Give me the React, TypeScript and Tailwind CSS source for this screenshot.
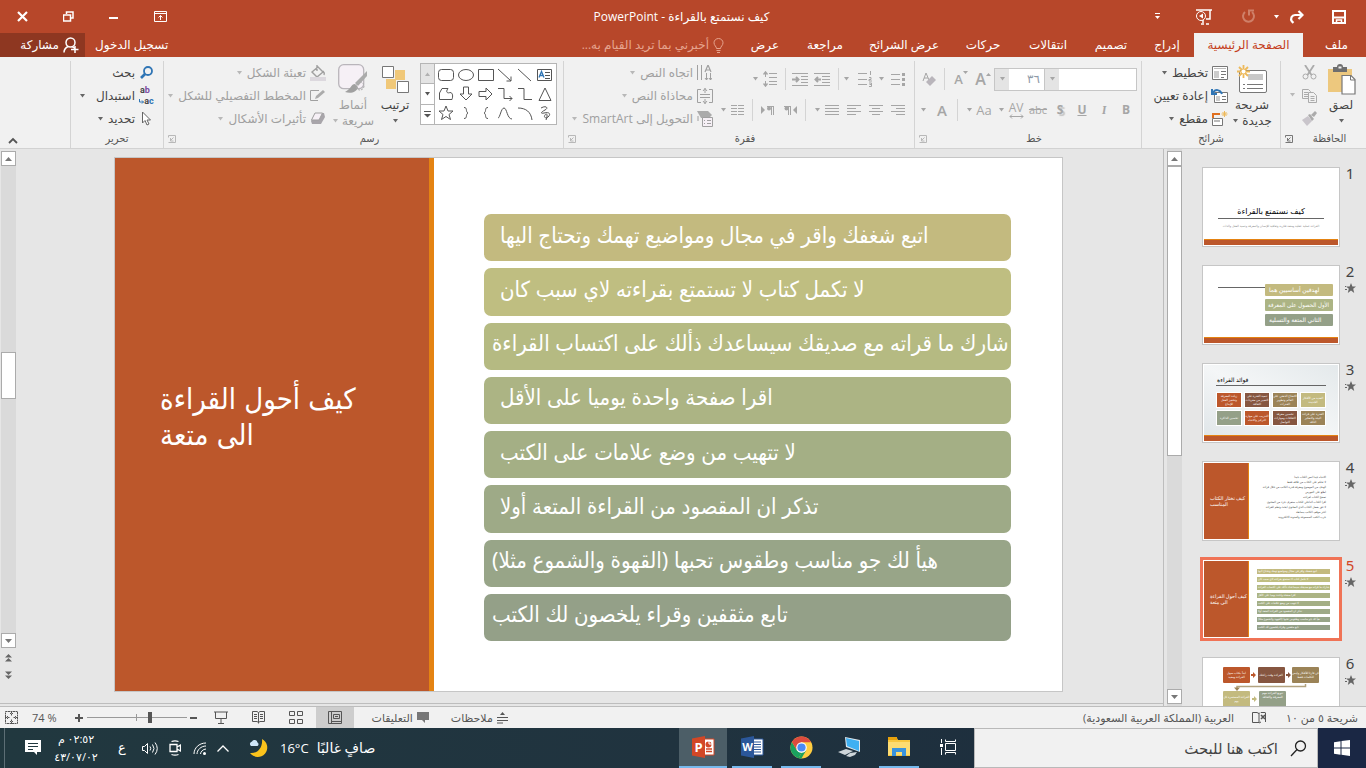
import type { ReactNode } from 'react';

type IconProps = {
  w: number;
  h: number;
  children: ReactNode;
  className?: string;
};

// Stroke icon on a 1:1 pixel grid
function Icon({ w, h, children, className = '' }: IconProps) {
  return (
    <svg width={w} height={h} viewBox={`0 0 ${w} ${h}`} fill="none" stroke="currentColor" className={`shrink-0 ${className}`} aria-hidden="true">
      {children}
    </svg>
  );
}

function Caret({ className = '' }: { className?: string }) {
  return (
    <svg width="7" height="4" viewBox="0 0 7 4" className={`shrink-0 ${className}`} aria-hidden="true">
      <path d="M1 0h5L3.500 3.500z" fill="currentColor" />
    </svg>
  );
}

function Sep({ className = '' }: { className?: string }) {
  return <span className={`w-px h-[22px] shrink-0 bg-[#d4d4d4] ${className}`} />;
}

const tabs = [
  { label: 'إدراج', width: 'w-[54px]' },
  { label: 'تصميم', width: 'w-[58px]' },
  { label: 'انتقالات', width: 'w-[68px]' },
  { label: 'حركات', width: 'w-[62px]' },
  { label: 'عرض الشرائح', width: 'w-[96px]' },
  { label: 'مراجعة', width: 'w-[62px]' },
  { label: 'عرض', width: 'w-[58px]' },
];

const points = [
  { text: 'اتبع شغفك واقر في مجال ومواضيع تهمك وتحتاج اليها', color: 'bg-[#c3ba7f]', pad: 'pl-4' },
  { text: 'لا تكمل كتاب لا تستمتع بقراءته لاي سبب كان', color: 'bg-[#bfbe81]', pad: 'pl-4' },
  { text: 'شارك ما قراته مع صديقك سيساعدك ذألك على اكتساب القراءة', color: 'bg-[#b5ba82]', pad: 'pl-2' },
  { text: 'اقرا صفحة واحدة يوميا على الأقل', color: 'bg-[#acb484]', pad: 'pl-4' },
  { text: 'لا تتهيب من وضع علامات على الكتب', color: 'bg-[#a4af85]', pad: 'pl-4' },
  { text: 'تذكر ان المقصود من القراءة المتعة أولا', color: 'bg-[#9eaa87]', pad: 'pl-4' },
  { text: 'هيأ لك جو مناسب وطقوس تحبها (القهوة والشموع مثلا)', color: 'bg-[#98a588]', pad: 'pl-2' },
  { text: 'تابع مثقفين وقراء يلخصون لك الكتب', color: 'bg-[#94a088]', pad: 'pl-2' },
];

function TitleBar() {
  return (
    <header className="flex h-[33px] items-center text-white">
      <div className="flex flex-1 items-center pr-[20px]">
        <button aria-label="حفظ">
          <Icon w={14} h={14}>
            <path d="M1 1h12v12H1z" strokeWidth="2" />
            <path d="M2 7.500h10" strokeWidth="2" />
            <path d="M4.500 13v-3h5v3" strokeWidth="1.500" />
          </Icon>
        </button>
        <button aria-label="إعادة" className="ms-[28px]">
          <Icon w={15} h={14}>
            <path d="M13 5H6a4 4 0 0 0-3 6.500l1.500 1.300" strokeWidth="2.200" />
            <path d="M9.500 1l4 4-4 4" strokeWidth="2.200" />
          </Icon>
        </button>
        <Caret className="ms-[9px]" />
        <button aria-label="تراجع" className="ms-[17px] text-[#cf8069]">
          <Icon w={15} h={15}>
            <path d="M4 3a5.500 5.500 0 1 0 7 0" strokeWidth="2" />
            <path d="M8 6.500V1.500h5" strokeWidth="2" />
          </Icon>
        </button>
        <button aria-label="بدء العرض" className="ms-[29px]">
          <Icon w={17} h={16}>
            <path d="M1 1h16M15 1v9h-4M8 11v3M6 15h3M11 15h3" strokeWidth="1.500" />
            <circle cx="6" cy="7" r="4.500" />
            <path d="M8 4.500v5L4 7z" fill="currentColor" stroke="none" />
          </Icon>
        </button>
        <button aria-label="تخصيص شريط الأدوات" className="ms-[34px]">
          <Icon w={7} h={7}>
            <path d="M1 .5h5" />
            <path d="M1 3h5L3.500 6z" fill="currentColor" stroke="none" />
          </Icon>
        </button>
      </div>
      <h1 className="text-[12px] leading-4">كيف نستمتع بالقراءة - PowerPoint</h1>
      <div className="flex flex-1 items-center justify-end gap-[35px] pl-[17px]">
        <button aria-label="خيارات الشريط">
          <Icon w={13} h={11}>
            <path d="M.5.500h12v10H.5zM.5 2.500h12M6.500 9V4.500M4.500 6.500l2-2 2 2" />
          </Icon>
        </button>
        <button aria-label="تصغير">
          <Icon w={10} h={10}>
            <path d="M0 6h9" strokeWidth="2" />
          </Icon>
        </button>
        <button aria-label="استعادة">
          <Icon w={11} h={11}>
            <path d="M3.500 3V1H10v6H8M.5 4h7v6h-7z" strokeWidth="1.500" />
          </Icon>
        </button>
        <button aria-label="إغلاق">
          <Icon w={11} h={11}>
            <path d="M1 1l9 9M10 1l-9 9" strokeWidth="2.200" />
          </Icon>
        </button>
      </div>
    </header>
  );
}

function TabRow() {
  return (
    <nav className="flex h-6 items-stretch text-[12px] leading-[22px] whitespace-nowrap text-white">
      <button className="w-[59px]">ملف</button>
      <button className="ms-1 w-[109px] bg-[#f1f1f1] text-[#c43e1c]">الصفحة الرئيسية</button>
      {tabs.map((t) => (
        <button key={t.label} className={t.width}>{t.label}</button>
      ))}
      <button className="ms-3 flex items-center gap-1 text-[#e6a48f]">
        <Icon w={11} h={15}>
          <path d="M3.500 10.500C3.500 8.500 1 7.500 1 4.800a4.500 4.300 0 0 1 9 0c0 2.700-2.500 3.700-2.500 5.700zM3.500 12.500h4M4 14.500h3" />
        </Icon>
        أخبرني بما تريد القيام به...
      </button>
      <span className="flex-1" />
      <button className="px-2.5">تسجيل الدخول</button>
      <button className="flex w-[85px] items-center gap-1 bg-[#8e3721] pr-1.5">
        <Icon w={16} h={16}>
          <circle cx="7.500" cy="5.500" r="4.500" strokeWidth="1.500" />
          <path d="M1 15.500c0-3 2-5 4-6M9 9.500l3 2M8 12.500h7.500M12 9v7" strokeWidth="1.500" />
        </Icon>
        مشاركة
      </button>
    </nav>
  );
}

type GroupProps = {
  label: string;
  width: string;
  launcher?: boolean;
  dim?: boolean;
  children: ReactNode;
};

function Group({ label, width, launcher, dim, children }: GroupProps) {
  return (
    <section aria-label={label} className={`flex shrink-0 flex-col pt-1 ${width}`}>
      <div className="flex flex-1 border-l border-[#d4d4d4]">
        <div className="flex flex-1 flex-col">
          <div className="flex h-[69px]">{children}</div>
          <div className="flex h-[18px] items-center text-[11px] leading-4 text-[#555]">
            <span className="flex-1 text-center font-['DejaVu_Sans_Condensed','DejaVu_Sans',sans-serif]">{label}</span>
            {launcher && (
              <button aria-label={`خيارات ${label}`} className={`w-3 ${dim ? 'text-[#b8b8b8]' : 'text-[#777]'}`}>
                <Icon w={8} h={8}>
                  <path d="M7.500 7.500V.5H.5v2M.5 7.500h7M5.500 2.500l-3 3M2.500 3v3h3" />
                </Icon>
              </button>
            )}
          </div>
        </div>
      </div>
    </section>
  );
}

type CommandProps = {
  icon: ReactNode;
  label: string;
  dim?: boolean;
  caret?: string;
};

function Command({ icon, label, dim, caret }: CommandProps) {
  return (
    <button className={`flex h-[23px] items-center text-[12px] whitespace-nowrap ${dim ? 'text-[#a0a0a0]' : 'text-[#444]'}`}>
      <span className="flex w-[17px] justify-center">{icon}</span>
      <span className="ms-[3px] leading-5">{label}</span>
      {caret && <Caret className={`${caret} ${dim ? 'text-[#b8b8b8]' : 'text-[#666]'}`} />}
    </button>
  );
}

type BigProps = {
  icon: ReactNode;
  lines: string[];
  width: string;
  dim?: boolean;
};

function BigCommand({ icon, lines, width, dim }: BigProps) {
  return (
    <button className={`flex flex-col items-center text-[12px] whitespace-nowrap ${width} ${dim ? 'text-[#a0a0a0]' : 'text-[#444]'}`}>
      <span className="flex h-9 items-center">{icon}</span>
      <span className="leading-4">{lines[0]}</span>
      <span className="flex h-4 items-center gap-[3px] leading-4">
        {lines[1]}
        <Caret className={dim ? 'text-[#b8b8b8]' : 'text-[#666]'} />
      </span>
    </button>
  );
}

function Clipboard() {
  return (
    <Group label="الحافظة" width="w-[86px]" launcher>
      <div className="flex pr-[6px]">
        <BigCommand
          width="w-[38px]"
          lines={['لصق']}
          icon={
            <Icon w={29} h={31}>
              <path d="M1 5h24v23H1z" fill="#edc87e" stroke="none" />
              <path d="M6 3h4a3 3 0 0 1 6 0h4v5H6z" fill="#6e6e6e" stroke="none" />
              <path d="M11.500 2.500h3v2h-3z" fill="#f1f1f1" stroke="none" />
              <path d="M15 11.500h9l4 4V30H15z" fill="#fff" stroke="#777" strokeWidth="1.200" />
              <path d="M23.500 12v4H28" stroke="#777" />
            </Icon>
          }
        />
        <div className="flex w-[26px] flex-col text-[#ababab]">
          <button aria-label="قص" className="flex h-[23px] items-center justify-center">
            <Icon w={15} h={15}>
              <path d="M3 0l6.500 10M12 0L5.500 10" strokeWidth="1.800" />
              <circle cx="3.500" cy="11.500" r="2.500" />
              <circle cx="11.500" cy="11.500" r="2.500" />
            </Icon>
          </button>
          <button aria-label="نسخ" className="flex h-[23px] items-center justify-center">
            <Icon w={15} h={14}>
              <path d="M.5.500h6l2 2v7h-8zM2 3.500h4M2 5.500h4M2 7.500h4" />
              <path d="M6.500 3.500h5l3 3v7h-8z" fill="#f1f1f1" />
              <path d="M8.500 7.500h4M8.500 9.500h4M8.500 11.500h4" />
            </Icon>
          </button>
          <button aria-label="نسخ التنسيق" className="flex h-[23px] items-center justify-center">
            <Icon w={16} h={15}>
              <path d="M1 9l6-4 4 5-5 5z" fill="#c9c5cb" stroke="none" />
              <path d="M7 4l2-1 4 5-2 2zM10 4l4-4 2 2-3 4z" fill="#ababab" stroke="none" />
            </Icon>
          </button>
        </div>
        <Caret className="mt-8 text-[#b8b8b8]" />
      </div>
    </Group>
  );
}

function Slides() {
  return (
    <Group label="شرائح" width="w-[139px]">
      <div className="flex pr-1">
        <BigCommand
          width="w-12"
          lines={['شريحة', 'جديدة']}
          icon={
            <Icon w={31} h={29} className="text-[#777]">
              <rect x="2.500" y="5.500" width="27" height="22" rx="1.500" fill="#fff" />
              <path d="M11 9h15v6H11z" fill="#c8c8c8" stroke="none" />
              <path d="M6 19.500h2M10 19.500h16M6 23.500h2M10 23.500h16" />
              <path d="M6.500 0v13M0 6.500h13M2 2l9 9M11 2l-9 9" stroke="#edb95a" strokeWidth="1.800" />
              <circle cx="6.500" cy="6.500" r="2" fill="#fff" stroke="none" />
            </Icon>
          }
        />
        <div className="flex flex-col">
          <Command
            label="تخطيط"
            caret="ms-1"
            icon={
              <Icon w={16} h={14} className="text-[#777]">
                <path d="M.5.500h15v13H.5z" fill="#fff" />
                <path d="M2 2.500h12" stroke="#bbb" />
                <path d="M2 5h5v7H2z" fill="#ccc" stroke="none" />
                <path d="M9 5.500h5M9 8.500h5M9 11.500h3" />
              </Icon>
            }
          />
          <Command
            label="إعادة تعيين"
            icon={
              <Icon w={17} h={15} className="text-[#777]">
                <path d="M3.500 4.500h13v10h-13z" fill="#fff" />
                <path d="M5 8h4v5H5z" fill="#ccc" stroke="none" />
                <path d="M11 8.500h4M11 11.500h4" />
                <path d="M2 5c2-4 7-4 9 1M1 1v5h5" stroke="#2f75b5" strokeWidth="2" />
              </Icon>
            }
          />
          <Command
            label="مقطع"
            caret="ms-1"
            icon={
              <Icon w={16} h={15} className="text-[#777]">
                <path d="M0 3h8M1 3v4" stroke="#e07020" strokeWidth="2" />
                <path d="M.5 7.500h10v7H.5z" fill="#fff" />
                <path d="M2 10h6" stroke="#bbb" strokeWidth="2" />
                <path d="M12.500 0v6M9.500 3h6M10.500 1l4 4M14.500 1l-4 4" stroke="#edb95a" />
              </Icon>
            }
          />
        </div>
      </div>
    </Group>
  );
}

function FontGroup() {
  return (
    <Group label="خط" width="w-[227px]" launcher dim>
      <div className="flex flex-col pr-[4px] text-[#a6a6a6]">
        <div className="flex h-9 items-center">
          <div className="flex h-[23px] w-[93px] border border-[#c6c6c6] bg-white">
            <input aria-label="نوع الخط" className="w-full min-w-0 flex-1 px-1 outline-none" />
            <button aria-label="قائمة الخطوط" className="flex w-[14px] items-center justify-center bg-[#e4e4e4]">
              <Caret />
            </button>
          </div>
          <div className="flex h-[23px] w-[50px] border border-r-0 border-[#c6c6c6] bg-white">
            <input aria-label="حجم الخط" defaultValue="٣٦" className="w-full min-w-0 flex-1 pr-1 text-[12px] text-[#8f9aa8] outline-none" />
            <button aria-label="قائمة الأحجام" className="flex w-[14px] items-center justify-center bg-[#e4e4e4]">
              <Caret />
            </button>
          </div>
          <button aria-label="تكبير الخط" className="flex w-[22px] items-start justify-center" dir="ltr">
            <span className="text-base leading-5 font-semibold">A</span>
            <Icon w={5} h={3} className="mt-1"><path d="M0 3h5L2.500 0z" fill="currentColor" stroke="none" /></Icon>
          </button>
          <button aria-label="تصغير الخط" className="flex w-[22px] items-start justify-center" dir="ltr">
            <span className="text-[13px] leading-6 font-semibold">A</span>
            <Icon w={5} h={3} className="mt-1"><path d="M0 0h5L2.500 3z" fill="currentColor" stroke="none" /></Icon>
          </button>
          <Sep className="mx-[5px]" />
          <button aria-label="مسح التنسيق" className="flex w-5 justify-center">
            <Icon w={15} h={15}>
              <path d="M1 9L4 1l3 7M2 6h4" />
              <path d="M4 10l6-6 4 4-6 6z" fill="#b9b5bb" stroke="none" />
            </Icon>
          </button>
        </div>
        <div className="flex h-[26px] items-center text-[12px] leading-5">
          <button className="w-[22px] font-bold">B</button>
          <button className="w-[22px] font-serif font-bold italic">I</button>
          <button className="w-[22px] font-bold underline">U</button>
          <button className="w-[22px] font-bold [text-shadow:2px_2px_1px_#c4c4c4]">S</button>
          <button className="w-[22px] text-[11px] line-through">abc</button>
          <button aria-label="تباعد الأحرف" className="flex w-[22px] flex-col items-center">
            <span className="leading-3">AV</span>
            <Icon w={15} h={5}><path d="M1 2.500h13M3 .5l-2 2 2 2M12 .5l2 2-2 2" /></Icon>
          </button>
          <Caret />
          <button className="ms-[3px] w-[22px] text-[13px]">Aa</button>
          <Caret />
          <Sep className="mx-2" />
          <button className="w-[14px] text-[15px] font-semibold">A</button>
          <Caret className="ms-2" />
        </div>
      </div>
    </Group>
  );
}

function ParagraphGroup() {
  return (
    <Group label="فقرة" width="w-[351px]" launcher dim>
      <div className="flex w-[196px] flex-col pr-[9px] text-[#a6a6a6]">
        <div className="flex h-9 items-center">
          <button aria-label="تعداد نقطي">
            <Icon w={14} h={15}>
              <path d="M0 2.500h9M0 7.500h9M0 12.500h9" />
              <path d="M11 1h3v3h-3zM11 6h3v3h-3zM11 11h3v3h-3z" fill="currentColor" stroke="none" />
            </Icon>
          </button>
          <Caret className="ms-1.5" />
          <button aria-label="تعداد رقمي" className="ms-1.5">
            <Icon w={14} h={16}>
              <path d="M0 2.500h9M0 8.500h9M0 13.500h9M12.500 0v4M11 6.500h2v2h-2v1.500h3M11 12h2.500v3.500H11M11.500 13.500h2" />
            </Icon>
          </button>
          <Caret className="ms-2" />
          <Sep className="ms-1" />
          <button aria-label="تقليل المسافة البادئة" className="ms-2">
            <Icon w={16} h={13}>
              <path d="M0 .5h16M8 3.500h8M8 6.500h8M8 9.500h8M0 12.500h16" />
              <path d="M1 6.500h6M4 4L1.500 6.500 4 9" strokeWidth="2" />
            </Icon>
          </button>
          <button aria-label="زيادة المسافة البادئة" className="ms-1.5">
            <Icon w={16} h={13}>
              <path d="M0 .5h16M9 3.500h7M9 6.500h7M9 9.500h7M0 12.500h16" />
              <path d="M0 6.500h6M4 4l2.500 2.500L4 9" strokeWidth="2" />
            </Icon>
          </button>
          <Sep className="ms-1.5" />
          <button aria-label="تباعد الأسطر" className="ms-2">
            <Icon w={14} h={16}>
              <path d="M6 2.500h8M6 6.500h8M6 10.500h8M6 13.500h8M2.500 1v5M2.500 10v5" />
              <path d="M.5 3.500l2-2.500 2 2.500M.5 12.500l2 2.500 2-2.500" strokeWidth="1.500" />
            </Icon>
          </button>
          <Caret className="ms-1" />
        </div>
        <div className="flex h-[26px] items-center">
          <div className="flex gap-2">
            <button aria-label="محاذاة لليمين"><Icon w={14} h={11}><path d="M0 .5h14M5 3.500h9M0 6.500h14M5 9.500h9" /></Icon></button>
            <button aria-label="توسيط"><Icon w={14} h={11}><path d="M0 .5h14M3 3.500h8M0 6.500h14M3 9.500h8" /></Icon></button>
            <button aria-label="محاذاة لليسار"><Icon w={14} h={11}><path d="M0 .5h14M0 3.500h9M0 6.500h14M0 9.500h9" /></Icon></button>
            <button aria-label="ضبط"><Icon w={14} h={11}><path d="M0 .5h14M0 3.500h14M0 6.500h14M0 9.500h14" /></Icon></button>
          </div>
          <Caret className="ms-1" />
          <Sep className="ms-2" />
          <button aria-label="من اليمين لليسار" className="ms-2">
            <Icon w={13} h={9}>
              <path d="M0 0v8l4-4z" fill="currentColor" stroke="none" transform="translate(9 0) scale(-1 1) translate(-4 0)" />
              <path d="M0 .5h7M6.500 0v9M4.500 0v9" />
              <circle cx="2.500" cy="2.500" r="2" fill="currentColor" stroke="none" />
            </Icon>
          </button>
          <button aria-label="من اليسار لليمين" className="ms-2.5">
            <Icon w={13} h={9}>
              <path d="M0 0v8l4-4z" fill="currentColor" stroke="none" />
              <path d="M6 .5h7M12.500 0v9M10.500 0v9" />
              <circle cx="8" cy="2.500" r="2" fill="currentColor" stroke="none" />
            </Icon>
          </button>
          <Sep className="ms-2" />
          <button aria-label="أعمدة" className="ms-2">
            <Icon w={13} h={11}>
              <path d="M0 .5h6M0 3.500h6M0 6.500h6M0 9.500h6M7 .5h6M7 3.500h6M7 6.500h6M7 9.500h6" />
            </Icon>
          </button>
          <Caret className="ms-1" />
        </div>
      </div>
      <div className="ms-[5px] flex flex-col">
        <Command
          dim
          label="اتجاه النص"
          caret="ms-1"
          icon={
            <Icon w={15} h={16}>
              <path d="M.5 0v15M4.500 0v15M9.500 8v7M13.500 8v7M8 13l1.500 2 1.500-2M12 13l1.500 2 1.500-2" />
              <path d="M8 7l3-7 3 7M9 5h4" strokeWidth="1.200" />
            </Icon>
          }
        />
        <Command
          dim
          label="محاذاة النص"
          caret="ms-1"
          icon={
            <Icon w={16} h={16}>
              <path d="M4 1.500H.5v13H4M12 1.500h3.500v13H12" />
              <path d="M8 0v5M6 3l2-2.500L10 3M8 11v5M6 13l2 2.500L10 13M3 6.500h10M3 9.500h10" />
            </Icon>
          }
        />
        <Command
          dim
          label="التحويل إلى SmartArt"
          caret="ms-1"
          icon={
            <Icon w={16} h={16}>
              <path d="M0 0h11l4 4-3 3H4z" fill="#ababab" stroke="none" />
              <path d="M5.500 6.500h10v9h-10z" fill="#f6f0f6" />
              <path d="M7 9.500h1M10 9.500h4M7 12.500h1M10 12.500h4M1 5v5" />
            </Icon>
          }
        />
      </div>
    </Group>
  );
}

// Gallery cells, right to left
const shapes = [
  <><path d="M.5 2.500h14v11H.5z" /><path d="M2 10.500l2.500-6 2.500 6M3 8.500h3" stroke="#2f75b5" strokeWidth="1.300" /><path d="M8 5.500h5M8 8.500h5M8 11.500h5" /></>,
  <path d="M1 2l13 12" />,
  <path d="M1 2l13 12M14 9.500V14H9.500" />,
  <path d="M.5 2.500h15v11H.5z" />,
  <ellipse cx="8" cy="8" rx="7.500" ry="5.500" />,
  <rect x=".5" y="2.500" width="15" height="11" rx="3" />,
  <path d="M8 2L2 14.500h12z" />,
  <path d="M1 2.500h6v11h8" />,
  <path d="M1 2.500h6v10h8M12.500 10l2.500 2.500-2.500 2.500" />,
  <path d="M1 5.500h7V2l6 6-6 6v-3.500H1z" />,
  <path d="M5.500 1h5v7H14l-6 6-6-6h3.500z" />,
  <path d="M4 2.500h6c-3 4 0 5 2 4 3 0 3 4 2 7H1.500V7z" />,
  <path d="M4 3c5-3 8 0 4 2S3 9 7 8s7 0 5 3-6 2-4-1 3 1 1 5" />,
  <path d="M1 3c8 0 13 4 14 12" />,
  <path d="M1 13C3 13 4 3 7 3s3 11 8 11" />,
  <path d="M10 2.500c-4 0-1 4-4 5.500 3 1.500 0 5.500 4 5.500" />,
  <path d="M6 2.500c4 0 1 4 4 5.500-3 1.500 0 5.500-4 5.500" />,
  <path d="M8 1l2 5h5l-4 3.500 1.500 5L8 11.500l-4.500 3 1.500-5L1 6h5z" />,
];

function DrawingGroup() {
  return (
    <Group label="رسم" width="w-[400px]" launcher dim>
      <div className="ms-[6px] mt-0.5 flex h-[62px] w-[137px] shrink-0 border border-[#b5b5b5] bg-white">
        <div className="grid flex-1 grid-cols-6 grid-rows-3 p-px">
          {shapes.map((s, i) => (
            <button key={i} aria-label={`شكل ${i + 1}`} className="flex items-center justify-center text-[#555]">
              <Icon w={16} h={16}>{s}</Icon>
            </button>
          ))}
        </div>
        <div className="flex w-[14px] flex-col border-r border-[#b5b5b5] text-[#555]">
          <button aria-label="أعلى" className="flex flex-1 items-center justify-center bg-[#e4e4e4] text-[#b0b0b0]"><Caret className="rotate-180" /></button>
          <button aria-label="أسفل" className="flex flex-1 items-center justify-center border-y border-[#b5b5b5]"><Caret /></button>
          <button aria-label="المزيد" className="flex flex-1 items-center justify-center">
            <Icon w={7} h={7}><path d="M0 .5h7" /><path d="M0 3h7L3.500 6.500z" fill="currentColor" stroke="none" /></Icon>
          </button>
        </div>
      </div>
      <div className="ms-[6px] flex">
        <BigCommand
          width="w-[38px]"
          lines={['ترتيب']}
          icon={
            <Icon w={27} h={27}>
              <path d="M13 4h10v10H13zM4 13h10v10H4z" fill="#f0c879" stroke="none" />
              <path d="M.5.500h11v11H.5zM15.500 15.500h11v11h-11z" fill="#fff" stroke="#777" />
            </Icon>
          }
        />
        <BigCommand
          dim
          width="w-[46px]"
          lines={['أنماط', 'سريعة']}
          icon={
            <Icon w={30} h={30}>
              <rect x=".7" y=".7" width="25" height="24" rx="5" fill="#f6f0f6" stroke="#b9b5bb" strokeWidth="1.300" />
              <path d="M29 7L17 19l3 3 9-10z" fill="#ababab" stroke="none" />
              <path d="M17 20c-4 0-4 5-10 8 6 2 12 0 13-5z" fill="#a0a0a0" stroke="none" />
              <circle cx="22" cy="22" r="4" strokeDasharray="2 1" stroke="#ababab" />
            </Icon>
          }
        />
      </div>
      <div className="ms-[4px] flex flex-col">
        <Command
          dim
          label="تعبئة الشكل"
          caret="ms-1"
          icon={
            <Icon w={16} h={16}>
              <path d="M2 7l6-5 5 5-6 5zM7 0v6M13 6c2 2 1 4 1 4" strokeWidth="1.400" />
              <path d="M0 12h16v4H0z" fill="#dcd8de" stroke="none" />
            </Icon>
          }
        />
        <Command
          dim
          label="المخطط التفصيلي للشكل"
          caret="ms-1"
          icon={
            <Icon w={16} h={13}>
              <path d="M9 1.500H.5v10H8" />
              <path d="M5 10l1-3 7-6 2 2-7 6z" fill="#ababab" stroke="none" />
            </Icon>
          }
        />
        <Command
          dim
          label="تأثيرات الأشكال"
          caret="ms-1"
          icon={
            <Icon w={16} h={13}>
              <path d="M5 1h9l1 4-4 7H2L1 9z" fill="#a8a5aa" stroke="none" />
              <path d="M5 1h7.500L9 8H1.500z" fill="#f6f0f6" />
            </Icon>
          }
        />
      </div>
    </Group>
  );
}

function EditingGroup() {
  return (
    <Group label="تحرير" width="w-[93px]">
      <div className="ms-2 flex flex-col">
        <Command
          label="بحث"
          icon={
            <Icon w={13} h={13} className="text-[#2f75b5]">
              <circle cx="8" cy="5" r="4" strokeWidth="1.800" />
              <path d="M5 8l-4 4" strokeWidth="2.600" />
            </Icon>
          }
        />
        <Command
          label="استبدال"
          caret="ms-2.5"
          icon={
            <span dir="ltr" className="flex flex-col items-end font-[Roboto] text-[9px] leading-[11px] font-bold">
              <span className="pr-1">a<span className="text-[#7c4ba0]">b</span></span>
              <span className="flex items-center">
                <Icon w={5} h={5} className="text-[#2f75b5]"><path d="M.5 0v3h4M3 1.500L4.500 3 3 4.500" /></Icon>
                <span>a<span className="text-[#2f75b5]">c</span></span>
              </span>
            </span>
          }
        />
        <Command
          label="تحديد"
          caret="ms-1"
          icon={
            <Icon w={9} h={15} className="text-[#666]">
              <path d="M.5 1v11l2.500-2.500L5 14l2-1-2-4h3.500z" fill="#fff" />
            </Icon>
          }
        />
      </div>
    </Group>
  );
}

function Ribbon() {
  return (
    <div className="flex h-[92px] shrink-0 overflow-hidden border-b border-[#d2d2d2] bg-[#f1f1f1]">
      <Clipboard />
      <Slides />
      <FontGroup />
      <ParagraphGroup />
      <DrawingGroup />
      <EditingGroup />
      <div className="flex flex-1 items-end justify-end pb-1 pl-2">
        <button aria-label="طي الشريط" className="text-[#555]">
          <Icon w={10} h={7}><path d="M1 6l4-4 4 4" strokeWidth="1.800" /></Icon>
        </button>
      </div>
    </div>
  );
}

function ScrollArrow({ up }: { up?: boolean }) {
  return (
    <button aria-label={up ? 'تمرير لأعلى' : 'تمرير لأسفل'} className="flex h-[15px] shrink-0 items-center justify-center border border-[#ababab] bg-white text-[#777]">
      <svg width="7" height="4" viewBox="0 0 7 4" className={up ? 'rotate-180' : ''} aria-hidden="true">
        <path d="M0 0h7L3.500 4z" fill="currentColor" />
      </svg>
    </button>
  );
}

function BarThumb({ color, children }: { color: string; children: ReactNode }) {
  return <div className={`overflow-hidden rounded-[1px] text-center text-[3px] leading-[4px] text-white ${color}`}>{children}</div>;
}

function ThumbFooter() {
  return <div className="h-[6px] border-t border-[#e48312] bg-[#bc572b]" />;
}

function ThumbSide({ children }: { children: ReactNode }) {
  return (
    <div dir="ltr" className="flex w-[45px] shrink-0 items-center border-r border-[#e48312] bg-[#bc572b] pl-[6px] text-white">
      <p className="text-left text-[5px] leading-[6px] whitespace-nowrap">{children}</p>
    </div>
  );
}

const benefits = [
  { text: 'العديد من الأفكار الجديدة', color: 'bg-[#c3ba7f]' },
  { text: 'الانفتاح الذهني على العالم وتطوير القدرات', color: 'bg-[#9b8357]' },
  { text: 'تنمية القدرة على التعبير من مفردات الثقافة', color: 'bg-[#865640]' },
  { text: 'زيادة المعرفة وتحفيز العقل للإبداع', color: 'bg-[#bc572b]' },
  { text: 'القدرة على قراءة البيئة والتفكير الناقد', color: 'bg-[#9b8357]' },
  { text: 'تحسين معرفة الثقافات ومهارات التواصل', color: 'bg-[#865640]' },
  { text: 'التدريب على مهارة التركيز والانتباه', color: 'bg-[#bc572b]' },
  { text: 'تحسين الذاكرة', color: 'bg-[#94a088]' },
];

const notes = [
  'الانتباه جيدا لنص الكتاب جيدا',
  'لا تحكم على الكتاب من غلافه فقط',
  'الهدف من الموضوع ومعرفة قدرة الكاتب من خلال قراءة',
  'اطلع على الفهرس',
  'تصفح الكتاب لقراءته',
  'اقرا الكتاب الداخلي للكتاب ستعرف جزء من المحتوى',
  'لا تثق بفضل الكتاب الذي المحتوى ابحث وتعلم للقراءة',
  'اختر موقف الكاتب ببساطة',
  'جرب الكتب المسموعة والمدونة الالكترونية',
];

function Thumb({ n, active, star = true, children }: { n: number; active?: boolean; star?: boolean; children: ReactNode }) {
  return (
    <li className="flex h-[98px] shrink-0 items-start">
      <div className="flex w-4 flex-col items-center">
        <span className={`font-[Noto_Sans] text-[15px] leading-3 ${active ? 'text-[#d24726]' : 'text-[#444]'}`}>{n}</span>
        {star && (
          <svg width="11" height="10" viewBox="0 0 11 10" className="mt-1.5 text-[#666]" aria-hidden="true">
            <path d="M6 0l1.400 3.500H11L8.200 5.800 9.200 10 6 7.600 2.800 10l1-4.200L1 3.500h3.600zM0 3h1v1H0zM0 6h2v1H0z" fill="currentColor" />
          </svg>
        )}
      </div>
      <button
        aria-label={`شريحة ${n}`}
        className={`ms-[2px] flex h-[80px] w-[138px] items-stretch border bg-white p-px ${active ? 'border-[#f07356] outline-2 outline-[#f07356]' : 'border-[#c6c6c6]'}`}
      >
        {children}
      </button>
    </li>
  );
}

function ThumbPane() {
  return (
    <aside aria-label="الشرائح" className="flex h-full w-[203px] shrink-0 border-l border-[#bdbdbd]">
      <ol className="flex min-h-0 flex-1 flex-col overflow-hidden pt-[18px] pr-2">
        <Thumb n={1} star={false}>
          <div className="flex flex-1 flex-col">
            <div className="flex flex-1 flex-col px-3.5 pt-9">
              <p className="border-b border-[#666] pb-0.5 text-center text-[8px] leading-[11px] text-black">كيف نستمتع بالقراءة</p>
              <p className="pt-[5px] text-center text-[3px] leading-[4px] whitespace-nowrap text-[#888]">القراءة عملية عقلية ومتعة فكرية وثقافية للإنسان والمعرفة وتنمية العقل والذات</p>
            </div>
            <ThumbFooter />
          </div>
        </Thumb>
        <Thumb n={2}>
          <div className="flex flex-1 flex-col">
            <div className="flex flex-1 pt-[17px] pr-[5px]">
              <div className="flex w-[68px] flex-col gap-[3px] text-[6px] leading-3 font-medium text-white">
                <p className="rounded-[1px] bg-[#c3ba7f] pl-1 text-left">لهدفين أساسيين هما</p>
                <p className="rounded-[1px] bg-[#acb484] pl-[3px] text-left font-['DejaVu_Sans_Condensed']">الأول الحصول على المعرفة</p>
                <p className="rounded-[1px] bg-[#94a088] pl-1 text-left">الثاني المتعة والتسلية</p>
              </div>
              <span className="mt-[3px] h-px w-[47px] bg-[#666]" />
            </div>
            <ThumbFooter />
          </div>
        </Thumb>
        <Thumb n={3}>
          <div className="flex flex-1 flex-col bg-gradient-to-bl from-[#e4e9eb] via-[#f4f6f7] to-[#dfe5e8]">
            <div className="flex flex-1 flex-col px-3 pt-2.5">
              <p dir="ltr" className="border-b border-[#666] pl-px text-left text-[6px] leading-[10px] whitespace-nowrap text-black">فوائد القراءة</p>
              <div className="mt-[6px] grid grid-cols-4 gap-[2px]">
                {benefits.map((b) => (
                  <p key={b.text} className={`flex h-4 items-center justify-center overflow-hidden border border-white text-center text-[3px] leading-[4px] text-white ${b.color}`}>{b.text}</p>
                ))}
              </div>
            </div>
            <ThumbFooter />
          </div>
        </Thumb>
        <Thumb n={4}>
          <div className="min-w-0 flex-1 overflow-hidden pt-3 pr-3">
            {notes.map((t) => (
              <p key={t} className="text-right font-['DejaVu_Sans_Condensed'] text-[3px] leading-[5px] whitespace-nowrap text-[#444]">{t}</p>
            ))}
          </div>
          <ThumbSide>كيف نختار الكتاب<br />المناسب</ThumbSide>
        </Thumb>
        <Thumb n={5} active>
          <div className="flex min-w-0 flex-1 flex-col justify-center gap-[3px] px-2">
            {points.map((p) => (
              <p key={p.text} dir="ltr" className={`h-[5px] overflow-hidden pl-px text-left font-['DejaVu_Sans_Condensed'] text-[3px] leading-[5px] whitespace-nowrap text-white ${p.color}`}>{p.text}</p>
            ))}
          </div>
          <ThumbSide>كيف أحول القراءة<br />الى متعة</ThumbSide>
        </Thumb>
        <Thumb n={6}>
          <div className="flex-1 px-[19px] pt-2">
            <div className="flex h-4 items-center justify-between">
              <BarThumb color="w-[27px] h-4 bg-[#9b8357] pt-1">كن قارئا للأفكار وليس للكلمات فقط</BarThumb>
              <Icon w={5} h={6}><path d="M0 2h2V0l3 3-3 3V4H0z" fill="#865640" stroke="none" /></Icon>
              <BarThumb color="w-[27px] h-4 bg-[#865640] pt-1.5">القراءة وقت راحتك</BarThumb>
              <Icon w={5} h={6}><path d="M0 2h2V0l3 3-3 3V4H0z" fill="#bc572b" stroke="none" /></Icon>
              <BarThumb color="w-[27px] h-4 bg-[#bc572b] pt-1">ابدأ بكتاب سهل القراءة ومفيد</BarThumb>
            </div>
            <Icon w={96} h={7} className="mt-px">
              <path d="M82.500 0v2.500H14V5" stroke="#b3a37f" strokeWidth="1.500" />
              <path d="M11 3.500h6L14 7z" fill="#9b8357" stroke="none" />
            </Icon>
            <div className="flex h-4 items-center justify-end gap-[2px]">
              <BarThumb color="w-[27px] h-4 bg-[#94a088]">تنويع القراءة مهم للمعرفة والثقافة</BarThumb>
              <Icon w={5} h={6}><path d="M0 2h2V0l3 3-3 3V4H0z" fill="#c3ba7f" stroke="none" /></Icon>
              <BarThumb color="w-[27px] h-4 bg-[#c3ba7f] pt-1">القراءة المستمرة كل يوم</BarThumb>
            </div>
          </div>
        </Thumb>
      </ol>
      <div className="ms-[14px] me-[3px] flex w-[15px] flex-col bg-[#dadada] py-0.5">
        <ScrollArrow up />
        <div className="h-[290px] border border-[#ababab] bg-white" />
        <span className="flex-1" />
        <ScrollArrow />
      </div>
    </aside>
  );
}

function Slide() {
  return (
    <article className="ms-[100px] me-[98px] flex min-w-0 flex-1 border border-[#c6c6c6] bg-white">
      <ul className="flex min-w-0 flex-1 flex-col gap-[7px] pt-14 pr-[51px] pb-[50px] pl-[50px] font-['Open_Sans','DejaVu_Sans_Condensed','DejaVu_Sans',sans-serif]">
        {points.map((p) => (
          <li key={p.text} className={`flex flex-1 items-center justify-end rounded-[7px] pb-2 text-[22px] leading-8 whitespace-nowrap text-white ${p.color} ${p.pad}`}>
            {p.text}
          </li>
        ))}
      </ul>
      <div className="flex w-[319px] items-center border-r-[5px] border-[#e48312] bg-[#bc572b] pl-[45px] font-['DejaVu_Sans_Condensed','DejaVu_Sans',sans-serif]" dir="ltr">
        <h2 className="pb-4 text-left text-[29px] leading-9 whitespace-nowrap text-white">كيف أحول القراءة<br />الى متعة</h2>
      </div>
    </article>
  );
}

function Workspace() {
  return (
    <main className="flex min-h-0 flex-1 bg-[#e6e6e6]">
      <ThumbPane />
      <div className="mb-[2px] flex min-w-0 flex-1 border-b border-[#bdbdbd]">
        <div className="flex min-w-0 flex-1 pt-2 pb-[11px]">
          <Slide />
        </div>
        <div className="me-px flex w-[15px] flex-col pt-0.5 pb-6">
          <ScrollArrow up />
          <div className="flex flex-1 flex-col bg-[#dadada]">
            <span className="flex-[186]" />
            <span className="h-[47px] border border-[#ababab] bg-white" />
            <span className="flex-[235]" />
          </div>
          <ScrollArrow />
          <div className="flex flex-col items-center gap-[9px] pt-1.5 text-[#666]">
            <Icon w={7} h={8}><path d="M0 3.500h7L3.500 0zM0 7.500h7L3.500 4z" fill="currentColor" stroke="none" /></Icon>
            <Icon w={7} h={8}><path d="M0 .5h7L3.500 4zM0 4.500h7L3.500 8z" fill="currentColor" stroke="none" /></Icon>
          </div>
        </div>
      </div>
    </main>
  );
}

function StatusBar() {
  return (
    <footer className="flex h-[22px] shrink-0 items-center border-t border-[#bdbdbd] bg-[#f1f1f1] pr-2 pl-[5px] text-[11px] leading-5 whitespace-nowrap text-[#555]">
      <span>شريحة ٥ من ١٠</span>
      <button aria-label="تدقيق إملائي" className="ms-5">
        <Icon w={14} h={13}>
          <path d="M7 11.500H.5v-10H5l2 1 1-1M7 2v9M7 12l2-1M13.500 2v9M9 1.500h4.500" />
          <path d="M9 4l4 4M13 4L9 8" strokeWidth="1.600" />
        </Icon>
      </button>
      <span className="ms-[18px]">العربية (المملكة العربية السعودية)</span>
      <span className="flex-1" />
      <button className="flex items-center gap-1">
        <Icon w={11} h={12}><path d="M0 5.500h11M0 8.500h11M0 11h6" /><path d="M3 3h5L5.500 0z" fill="currentColor" stroke="none" /></Icon>
        ملاحظات
      </button>
      <button className="ms-[22px] flex items-center gap-1">
        <Icon w={12} h={12}><path d="M0 0h12v8H8v3L5 8H0z" fill="#777" stroke="none" /></Icon>
        التعليقات
      </button>
      <button aria-label="عادي" className="ms-[18px] flex h-full w-[38px] items-center justify-center bg-[#cdcdcd]">
        <Icon w={14} h={13}><path d="M.5.500h13v12H.5zM3.500 0v13M5.500 3.500h6v4h-6zM4 10.500h9M7 5.500h3" /></Icon>
      </button>
      <button aria-label="فارز الشرائح" className="ms-[13px]">
        <Icon w={14} h={13}><path d="M.5.500h5v4h-5zM8.500.500h5v4h-5zM.5 8.500h5v4h-5zM8.500 8.500h5v4h-5z" /></Icon>
      </button>
      <button aria-label="قراءة" className="ms-6">
        <Icon w={13} h={13}><path d="M6.500 1.500v11M.5.500H5l1.500 1L8 .5h4.500v10H8l-1.500 1-1.500-1H.5zM2 3.500h3M2 5.500h3M2 7.500h3M8 3.500h3M8 5.500h3M8 7.500h3" /></Icon>
      </button>
      <button aria-label="عرض الشرائح" className="ms-6">
        <Icon w={14} h={13}><path d="M0 1h14M1.500 1v6.500h11V1M7 8v4M4 12.500h6" /></Icon>
      </button>
      <button aria-label="تصغير العرض" className="ms-[17px]"><Icon w={7} h={8}><path d="M0 4h7" strokeWidth="2" /></Icon></button>
      <input
        type="range"
        aria-label="تكبير/تصغير"
        defaultValue={36}
        className="ms-[3px] h-3 w-[100px] appearance-none bg-[linear-gradient(#999,#999),linear-gradient(#999,#999)] bg-[length:100%_1px,1px_7px] bg-center bg-no-repeat [&::-webkit-slider-thumb]:h-[11px] [&::-webkit-slider-thumb]:w-1 [&::-webkit-slider-thumb]:appearance-none [&::-webkit-slider-thumb]:bg-[#555]"
      />
      <button aria-label="تكبير العرض" className="ms-[4px]"><Icon w={8} h={8}><path d="M0 4h8M4 0v8" strokeWidth="2" /></Icon></button>
      <span dir="ltr" className="mr-[18px] font-[Open_Sans] text-[11px]">74 %</span>
      <button aria-label="ملاءمة" className="ms-[14px]">
        <Icon w={13} h={13}><path d="M.5.500h12v12H.5zM6.500 0v4.500M6.500 8.500V13M0 6.500h4.500M8.500 6.500H13M5 3l1.500-1.500L8 3M5 10l1.500 1.500L8 10M3 5L1.500 6.500 3 8M10 5l1.500 1.500L10 8" strokeDasharray="2 .5" /></Icon>
      </button>
    </footer>
  );
}

type TaskProps = { label: string; open?: boolean; active?: boolean; children: ReactNode };

function Task({ label, open, active, children }: TaskProps) {
  return (
    <button aria-label={label} className={`flex h-full w-12 flex-col items-center ${active ? 'bg-[#4c5e67]' : ''}`}>
      <span className="flex flex-1 items-center">{children}</span>
      <span className={`h-0.5 ${active ? 'w-12' : 'w-10'} ${open ? 'bg-[#76b9ed]' : ''}`} />
    </button>
  );
}

function Taskbar() {
  return (
    <div className="flex h-10 shrink-0 items-center bg-gradient-to-l from-[#1b2a3c] via-[#20333f] to-[#21383f] text-white">
      <button aria-label="ابدأ" className="flex h-full w-12 items-center justify-center bg-[#1a2744]">
        <svg width="16" height="16" viewBox="0 0 16 16" fill="#fff" aria-hidden="true">
          <path d="M0 2.200l6.500-.9v6.200H0zM7.500 1.100L16 0v7.500H7.500zM0 8.500h6.500v6.200L0 13.800zM7.500 8.500H16V16l-8.500-1.200z" />
        </svg>
      </button>
      <label className="flex h-full w-[344px] items-center border border-[#b9b9b9] bg-[#f1f1f1] pr-2.5">
        <svg width="17" height="17" viewBox="0 0 17 17" fill="none" stroke="#222" strokeWidth="1.300" aria-hidden="true">
          <circle cx="10.500" cy="6" r="5" />
          <path d="M7 9.500L1 16" />
        </svg>
        <input aria-label="بحث" placeholder="اكتب هنا للبحث" className="ms-3 min-w-0 flex-1 bg-transparent text-[15px] text-[#333] outline-none placeholder:text-[#444]" />
      </label>
      <div className="ms-[2px] flex h-full gap-px">
        <Task label="عرض المهام">
          <Icon w={17} h={16}>
            <path d="M5.500.500v2h10v-2M5.500 4.500h10v7h-10zM5.500 15.500v-2h10v2M1.500 0v4M1.500 9v7" />
            <path d="M0 5h3v3H0z" fill="currentColor" stroke="none" />
          </Icon>
        </Task>
        <Task label="مستكشف الملفات" open>
          <svg width="22" height="20" viewBox="0 0 22 20" aria-hidden="true">
            <path d="M0 1h9l1 2h12v16H0z" fill="#f8c73f" />
            <path d="M0 0h9v3H0z" fill="#e8a20c" />
            <path d="M2 5h20v13H0V5z" fill="#fddc72" />
            <path d="M4 19v-8h14v8h-4v-4H8v4z" fill="#3a93dc" />
          </svg>
        </Task>
        <Task label="سطح المكتب البعيد">
          <svg width="24" height="22" viewBox="0 0 24 22" aria-hidden="true">
            <path d="M7 1l15 3v12L8 11z" fill="#dfe8ee" />
            <path d="M8 2l13 3v10L9 10z" fill="#3fb0f2" />
            <path d="M0 16l8-3 7 2-8 4zM12 17l7-1-2 3-5 2-4-1z" fill="#cfd6da" />
          </svg>
        </Task>
        <Task label="Chrome" open>
          <svg width="23" height="23" viewBox="0 0 24 24" aria-hidden="true">
            <circle cx="12" cy="12" r="11.500" fill="#ffcd41" />
            <path d="M12 17.500L9 23.100A11.500 11.500 0 0 1 2.040 6.250L7.300 15z" fill="#1aa15f" />
            <path d="M12 17.500L17 14.500 12 23.500A11.500 11.500 0 0 1 9 23.100z" fill="#1aa15f" />
            <path d="M12 .5a11.500 11.500 0 0 1 10.100 6H12L7 14.500 2.040 6.250A11.500 11.500 0 0 1 12 .5z" fill="#dd4b3e" />
            <circle cx="12" cy="12" r="5.500" fill="#fff" />
            <circle cx="12" cy="12" r="4.300" fill="#4c8bf5" />
          </svg>
        </Task>
        <Task label="Word" open>
          <svg width="23" height="22" viewBox="0 0 23 22" aria-hidden="true">
            <path d="M11 3h11v16H11z" fill="#fff" stroke="#2b579a" />
            <path d="M13 6h7M13 8.500h7M13 11h7M13 13.500h7M13 16h7" stroke="#2b579a" />
            <path d="M0 2.500L13 0v22L0 19.500z" fill="#2b579a" />
            <text x="6.500" y="15" fontSize="11" fontWeight="700" fontFamily="Open Sans" textAnchor="middle" fill="#fff">W</text>
          </svg>
        </Task>
        <Task label="PowerPoint" open active>
          <svg width="23" height="22" viewBox="0 0 23 22" aria-hidden="true">
            <path d="M11 3h11v16H11z" fill="#fff" stroke="#d24726" />
            <path d="M14 13h6M14 15.500h6" stroke="#d24726" strokeWidth="1.500" />
            <circle cx="16.500" cy="8.500" r="3" fill="#d24726" />
            <path d="M17 8V4M17 8h4" stroke="#fff" />
            <path d="M0 2.500L13 0v22L0 19.500z" fill="#d24726" />
            <text x="6.500" y="15.500" fontSize="13" fontWeight="700" fontFamily="Open Sans" textAnchor="middle" fill="#fff">P</text>
          </svg>
        </Task>
      </div>
      <span className="flex-1" />
      <button className="flex items-center text-[14px] leading-5">
        <span>صافٍ غالبًا</span>
        <span dir="ltr" className="mr-2 font-[Open_Sans] text-[13px]">16°C</span>
        <svg width="20" height="19" viewBox="0 0 20 19" className="ms-[11px]" aria-hidden="true">
          <path d="M13 0a9.500 9.500 0 1 1-12 14c7 1 13-5 12-14z" fill="#fbc31c" />
          <path d="M2 7a2.500 2.500 0 0 1 1-4.500 3 3 0 0 1 5.500 1A2 2 0 0 1 8.500 7z" fill="#cfe6f7" />
        </svg>
      </button>
      <button aria-label="إظهار الأيقونات" className="ms-[20px]"><Icon w={12} h={7}><path d="M.5 6.500L6 1l5.500 5.500" strokeWidth="1.300" /></Icon></button>
      <button aria-label="الشبكة" className="ms-[10px]">
        <Icon w={14} h={13}>
          <path d="M1 12C1 6 6 1 13 1M4 12c0-4 4-8 9-8M7.500 12c0-2 2.500-5 5.500-5" />
          <circle cx="11.500" cy="11.500" r="1.500" fill="currentColor" stroke="none" />
        </Icon>
      </button>
      <button aria-label="الاجتماع" className="ms-[12px]">
        <Icon w={12} h={16}>
          <path d="M2.500 1.500Q6 .2 9.500 1.500M2.500 14.500Q6 15.800 9.500 14.500M1 4.500h7v7H1zM8 7l3.500-2v6L8 9" strokeWidth="1.300" />
        </Icon>
      </button>
      <button aria-label="الصوت" className="ms-[10px]">
        <Icon w={17} h={13}>
          <path d="M.5 4.500h2l3-3v10l-3-3h-2zM8 4.500q1.500 2 0 4M10.500 2.500q3 4 0 8M13 .5q4.500 6 0 12" />
        </Icon>
      </button>
      <button className="ms-[16px] w-2 text-[13px]">ع</button>
      <div className="ms-[20px] w-11 text-center text-[11px] leading-[18px] whitespace-nowrap">
        <p>٠٢:٥٢ م</p>
        <p>٤٣/٠٧/٠٢</p>
      </div>
      <button aria-label="الإشعارات" className="ms-[12px]">
        <Icon w={17} h={16}>
          <path d="M0 0h16v12h-4v3l-3-3H0z" fill="currentColor" stroke="none" />
          <path d="M3 3.500h10M3 6.500h10M3 9.500h5" stroke="#21383f" />
        </Icon>
      </button>
      <span className="ms-5 me-1 h-full w-px bg-[#5c6e75]" />
    </div>
  );
}

export default function App() {
  return (
    <div dir="rtl" lang="ar" className="flex h-screen flex-col overflow-hidden font-['Open_Sans','DejaVu_Sans',sans-serif]">
      <div className="shrink-0 bg-[#b7472a]">
        <TitleBar />
        <TabRow />
      </div>
      <Ribbon />
      <Workspace />
      <StatusBar />
      <Taskbar />
    </div>
  );
}
